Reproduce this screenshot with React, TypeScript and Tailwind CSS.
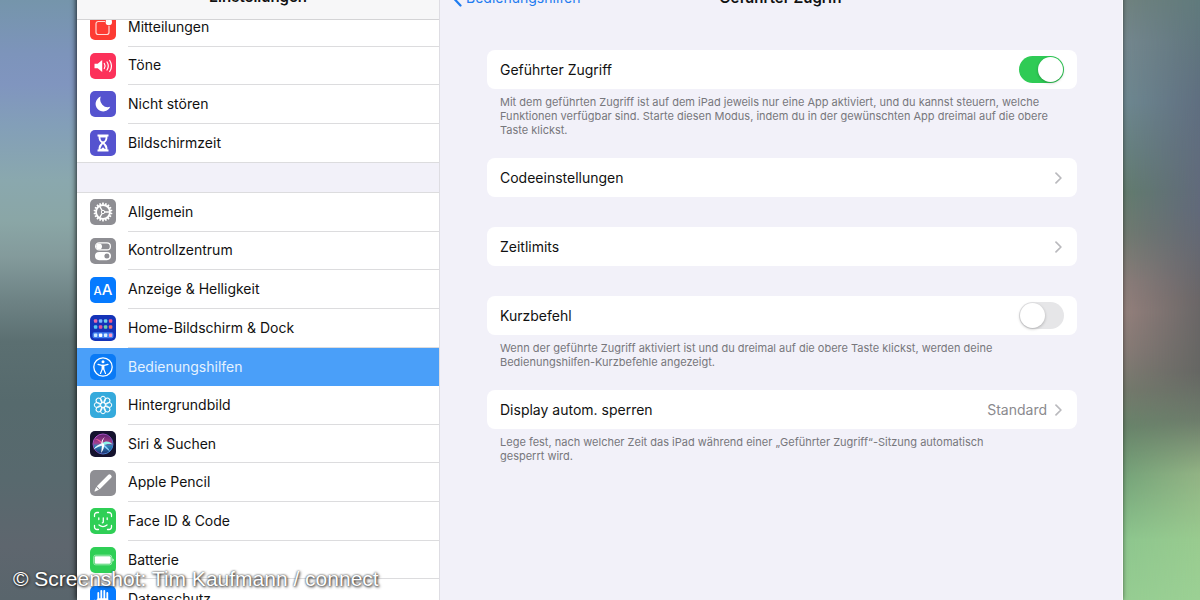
import type { ReactNode } from "react";

const svgProps = {
  viewBox: "0 0 26 26",
  fill: "none",
  "aria-hidden": true,
  className: "block size-[26px]",
} as const;

const petals = [0, 45, 90, 135, 180, 225, 270, 315];
const teeth = [0, 20, 40, 60, 80, 100, 120, 140, 160, 180, 200, 220, 240, 260, 280, 300, 320, 340];
const dockDots = [
  ["#e86aa8", "#79b8ff", "#6fd0e8", "#f0568c"],
  ["#58c8f0", "#e4549a", "#6ad0b0", "#f06a6a"],
];

const icons: Record<string, ReactNode> = {
  notifications: (
    <svg {...svgProps}>
      <path d="M15 7.500H8.200A2.200 2.200 0 0 0 6 9.700v8.600A2.200 2.200 0 0 0 8.200 20.500h8.600a2.200 2.200 0 0 0 2.200-2.200V12" stroke="#ffd9d6" strokeWidth="1.200" />
      <circle cx="18.800" cy="8" r="3.200" fill="#fff" />
    </svg>
  ),
  sounds: (
    <svg {...svgProps}>
      <path d="M4.500 10.700h3.200L12.200 7v12l-4.500-3.700H4.500z" fill="#fff" />
      <path d="M14.300 10.500q1.600 2.500 0 5M17 9q2.600 4 0 8M19.700 7.500q3.600 5.500 0 11" stroke="#fff" strokeWidth="1.200" strokeLinecap="round" />
    </svg>
  ),
  moon: (
    <svg {...svgProps}>
      <path d="M10.800 5.600a7.600 7.600 0 1 0 9.400 10.200A7.700 7.700 0 0 1 10.800 5.600z" fill="#fff" />
    </svg>
  ),
  hourglass: (
    <svg {...svgProps}>
      <path d="M7.500 4.500h11v2h-1c0 3.500-1 5-3 6.500 2 1.500 3 3 3 6.500h1v2h-11v-2h1c0-3.500 1-5 3-6.500-2-1.500-3-3-3-6.500h-1z" fill="#fff" />
      <path d="M10.300 7.500h5.400q-.2 2.200-1.700 3.700h-2q-1.500-1.500-1.700-3.700zM12.300 14.500 10.200 18.700h1.300l1.500-1.500 1.500 1.500h1.300l-2.100-4.200z" fill="#5553cf" />
    </svg>
  ),
  gear: (
    <svg {...svgProps}>
      {teeth.map((a) => (
        <path key={a} d="M12.300 3.600h1.400l.4 2.200h-2.200z" fill="#fff" transform={`rotate(${a} 13 13)`} />
      ))}
      <circle cx="13" cy="13" r="6.900" stroke="#fff" strokeWidth="1.700" />
      <path d="M13 13h6.500M13 13 9.700 7.300M13 13l-3.300 5.700" stroke="#fff" strokeWidth="1.300" />
      <circle cx="13" cy="13" r="1.700" fill="#8e8e93" stroke="#fff" strokeWidth="1" />
    </svg>
  ),
  controls: (
    <svg {...svgProps}>
      <rect x="5.600" y="4.900" width="14.800" height="7" rx="3.500" stroke="#fff" strokeWidth="1.200" />
      <circle cx="9.100" cy="8.400" r="2.900" fill="#fff" />
      <rect x="5" y="14" width="16" height="8.200" rx="4.100" fill="#fff" />
      <circle cx="16.900" cy="18.100" r="2.500" fill="#8e8e93" />
    </svg>
  ),
  display: (
    <svg {...svgProps}>
      <text x="3.600" y="18" fill="#fff" fontFamily="Inter, sans-serif" fontWeight="500" fontSize="11.500">A</text>
      <text x="11.800" y="18" fill="#fff" fontFamily="Inter, sans-serif" fontWeight="500" fontSize="15">A</text>
    </svg>
  ),
  home: (
    <svg {...svgProps}>
      <rect x="2.500" y="17.200" width="21" height="6" rx="1.800" fill="#3f7df0" />
      {dockDots.map((row, y) =>
        row.map((fill, x) => (
          <rect key={`${x}-${y}`} x={3.900 + x * 5} y={4.300 + y * 6} width="3.400" height="3.400" rx=".9" fill={fill} />
        )),
      )}
      {["#c8e8ff", "#ffffff", "#d8f0ff", "#ff9ac0"].map((fill, x) => (
        <rect key={fill} x={3.900 + x * 5} y="18.500" width="3.400" height="3.400" rx=".9" fill={fill} />
      ))}
    </svg>
  ),
  accessibility: (
    <svg {...svgProps}>
      <circle cx="13" cy="13" r="9.200" stroke="#fff" strokeWidth="1.300" />
      <circle cx="13" cy="7.700" r="1.500" fill="#fff" />
      <path d="M8 10.400l3.800.9h2.400l3.800-.9M12.300 11v4l-1.800 4.500M13.700 11v4l1.800 4.500" stroke="#fff" strokeWidth="1.200" strokeLinecap="round" strokeLinejoin="round" />
      <path d="M11.800 11h2.400v4.500h-2.400z" fill="#fff" />
    </svg>
  ),
  wallpaper: (
    <svg {...svgProps}>
      {petals.map((a) => (
        <ellipse key={a} cx="13" cy="7.300" rx="2.500" ry="3.100" stroke="#fff" strokeWidth="1" transform={`rotate(${a} 13 13)`} />
      ))}
      <circle cx="13" cy="13" r="2.400" stroke="#fff" strokeWidth="1" />
    </svg>
  ),
  siri: (
    <svg {...svgProps}>
      <defs>
        <linearGradient id="siri-ring" x1="4" y1="4" x2="22" y2="22" gradientUnits="userSpaceOnUse">
          <stop offset="0" stopColor="#c65bd6" />
          <stop offset=".5" stopColor="#7a3fa8" />
          <stop offset="1" stopColor="#2f9ee0" />
        </linearGradient>
        <linearGradient id="siri-orb" x1="13" y1="3" x2="13" y2="23" gradientUnits="userSpaceOnUse">
          <stop offset="0" stopColor="#5a1f6e" />
          <stop offset=".45" stopColor="#a83f8c" />
          <stop offset=".6" stopColor="#2a86b8" />
          <stop offset="1" stopColor="#1c2a6c" />
        </linearGradient>
      </defs>
      <circle cx="13" cy="13" r="10" fill="url(#siri-orb)" stroke="url(#siri-ring)" strokeWidth="1" />
      <path d="M13 12.500C10 8.500 7 7.500 5 8c3 1 5 3 8 5.500z" fill="#f0609c" />
      <path d="M12 12c4-2.500 8-2 10.500 1.500-3.500-1-6.500-.3-9.500 1z" fill="#8ff4ea" />
      <path d="M13.500 12c-4 .5-8 3-10 6.500 3.500-2.500 6.500-3.500 10-4z" fill="#e4f8ff" />
      <path d="M12.500 12.500c3 2 6 4.500 7.500 8-3.500-2.300-6-4.500-8-7z" fill="#8fd0ff" />
      <path d="M12 13c-.3 3-.3 6-1 9 2.500-3 3.500-6 3-9zM12.500 13c0-3 .7-5 2.500-7-2.800 2-3.800 4-3.500 7z" fill="#fff" />
    </svg>
  ),
  pencil: (
    <svg {...svgProps}>
      <path d="M18.300 4.800a1.600 1.600 0 0 1 2.300 0l.6.6a1.600 1.600 0 0 1 0 2.300L9.700 19.200l-2.900-2.900z" fill="#fff" />
      <path d="M6.200 17 9 19.800l-4 1.700a.4.4 0 0 1-.5-.5z" fill="#fff" />
    </svg>
  ),
  face: (
    <svg {...svgProps} stroke="#fff" strokeWidth="1.300" strokeLinecap="round">
      <path d="M4.500 8.500V7A2.500 2.500 0 0 1 7 4.500h1.500M17.500 4.500H19A2.500 2.500 0 0 1 21.500 7v1.500M21.500 17.500V19a2.500 2.500 0 0 1-2.500 2.500h-1.500M8.500 21.500H7A2.500 2.500 0 0 1 4.500 19v-1.500" />
      <path d="M8.800 9.800v1.700M17.200 9.800v1.700M13.300 9.800v4.200q0 .8-1 .8M9 17q4 3.200 8 0" />
    </svg>
  ),
  battery: (
    <svg {...svgProps}>
      <rect x="3.700" y="8.200" width="18" height="9.600" rx="2" stroke="#c9f3d2" strokeWidth=".7" />
      <rect x="4.700" y="9.200" width="16" height="7.600" rx="1.200" fill="#fff" />
      <path d="M22.500 11.300q1.200.4 1.200 1.700t-1.200 1.700z" fill="#fff" />
    </svg>
  ),
  hand: (
    <svg {...svgProps} stroke="#fff" strokeWidth="1.800" strokeLinecap="round">
      <path d="M8.300 14V7M11.300 13V4.800M14.300 13V4.800M17.300 14V7" />
      <path d="M8.200 13h9.200v4q0 5-4.500 5c-3 0-4-1-5.500-3.500L4.800 14.500" fill="#fff" strokeLinejoin="round" strokeWidth="1.600" />
    </svg>
  ),
};

type Item = { label: string; icon: string; color: string; active?: boolean };

const topItems: Item[] = [
  { label: "Mitteilungen", icon: "notifications", color: "bg-[#fd3b33]" },
  { label: "Töne", icon: "sounds", color: "bg-[#fc315a]" },
  { label: "Nicht stören", icon: "moon", color: "bg-[#5553cf]" },
  { label: "Bildschirmzeit", icon: "hourglass", color: "bg-[#5553cf]" },
];

const mainItems: Item[] = [
  { label: "Allgemein", icon: "gear", color: "bg-[#8e8e93]" },
  { label: "Kontrollzentrum", icon: "controls", color: "bg-[#8e8e93]" },
  { label: "Anzeige & Helligkeit", icon: "display", color: "bg-[#057aff]" },
  { label: "Home-Bildschirm & Dock", icon: "home", color: "bg-[#1433b8]" },
  { label: "Bedienungshilfen", icon: "accessibility", color: "bg-[#0a7af5]", active: true },
  { label: "Hintergrundbild", icon: "wallpaper", color: "bg-[#35aadc]" },
  { label: "Siri & Suchen", icon: "siri", color: "bg-[#15122e]" },
  { label: "Apple Pencil", icon: "pencil", color: "bg-[#8e8e93]" },
  { label: "Face ID & Code", icon: "face", color: "bg-[#2fcf56]" },
  { label: "Batterie", icon: "battery", color: "bg-[#2fcf56]" },
  { label: "Datenschutz", icon: "hand", color: "bg-[#057aff]" },
];

function SidebarRow({ item, last }: { item: Item; last: boolean }) {
  return (
    <li className={item.active ? "bg-[#4a9ff9] text-[#e4f2ff]" : ""}>
      <a href="#" aria-current={item.active ? "page" : undefined} className="flex h-full items-center gap-3 pl-[13px]">
        <span className={`size-[26px] shrink-0 overflow-hidden rounded-[5px] ${item.color}`}>{icons[item.icon]}</span>
        <span className={`flex h-full flex-1 items-center ${last || item.active ? "" : "border-b border-[#dcdcde]"}`}>
          {item.label}
        </span>
      </a>
    </li>
  );
}

function Chevron() {
  return (
    <svg viewBox="0 0 8 12" fill="none" aria-hidden className="h-3 w-2">
      <path d="M1 1.200 5.900 6 1 10.800" stroke="#b9b9bd" strokeWidth="1.700" strokeLinecap="round" strokeLinejoin="round" />
    </svg>
  );
}

function SwitchRow({ id, label, on }: { id: string; label: string; on?: boolean }) {
  return (
    <div className="flex h-[39px] items-center justify-between rounded-[8px] bg-white px-[13px]">
      <label htmlFor={id}>{label}</label>
      <input
        id={id}
        type="checkbox"
        role="switch"
        defaultChecked={on}
        className="h-[27px] w-[45px] appearance-none rounded-full bg-[#e6e6e8] p-px before:block before:size-[25px] before:rounded-full before:bg-white before:shadow-[0_1px_3px_rgba(0,0,0,0.25)] checked:bg-[#2fcb55] checked:before:ml-[18px]"
      />
    </div>
  );
}

function LinkRow({ label, value }: { label: string; value?: string }) {
  return (
    <button type="button" className="flex h-[39px] w-full items-center justify-between rounded-[8px] bg-white pr-[14px] pl-[13px]">
      <span>{label}</span>
      <span className="flex items-center gap-2 text-[#8a8a8e]">
        {value}
        <Chevron />
      </span>
    </button>
  );
}

function Note({ children }: { children: ReactNode }) {
  return <p className="mt-[6px] -mb-[9px] px-[13px] text-[11px] leading-[14px] text-[#77777c]">{children}</p>;
}

export default function App() {
  return (
    <div className="relative flex h-screen overflow-hidden font-[Inter,'Liberation_Sans',sans-serif] text-[14px] leading-5 text-[#111]">
      <div className="w-[77px] shrink-0 bg-[linear-gradient(to_bottom,#7595ab_0%,#7d94bb_9%,#8095bf_14%,#839fb8_21%,#8aa8ae_30%,#8aa6a6_37%,#839a9b_43%,#6e8385_50%,#5b6f71_57%,#566a6d_67%,#58696e_80%,#5e666e_91%,#59656c_100%)]" />
      <div className="z-10 -mt-[25px] flex min-w-0 flex-1 border-r border-[#fbfbfd] bg-[#f2f1f9] shadow-[-1px_0_5px_rgba(0,0,0,0.75)]">
        <nav aria-label="Einstellungen" className="flex w-[363px] shrink-0 flex-col border-r border-[#dedde3]">
          <header className="z-10 flex h-[45px] shrink-0 items-center justify-center border-b border-[#d4d4d6] bg-[#f7f7f8]">
            <h1 className="text-[15px] font-semibold">Einstellungen</h1>
          </header>
          <ul className="-mt-3 grid h-[155px] shrink-0 auto-rows-fr border-b border-[#dcdcde] bg-white">
            {topItems.map((item, i) => (
              <SidebarRow key={item.label} item={item} last={i === topItems.length - 1} />
            ))}
          </ul>
          <ul className="mt-[29px] grid h-[426px] shrink-0 auto-rows-fr border-t border-[#dcdcde] bg-white">
            {mainItems.map((item, i) => (
              <SidebarRow key={item.label} item={item} last={i === mainItems.length - 1} />
            ))}
          </ul>
        </nav>
        <main className="min-w-0 flex-1">
          <header className="grid h-[45px] grid-cols-[1fr_auto_1fr] items-center px-3">
            <a href="#" className="flex items-center gap-1 text-[#1f7cf0]">
              <svg viewBox="0 0 10 18" fill="none" aria-hidden className="h-[18px] w-[10px]">
                <path d="M8.500 1.500 1.500 9l7 7.500" stroke="currentColor" strokeWidth="2.200" strokeLinecap="round" strokeLinejoin="round" />
              </svg>
              Bedienungshilfen
            </a>
            <h2 className="text-[15px] font-semibold">Geführter Zugriff</h2>
          </header>
          <div className="flex flex-col gap-[30px] pt-[30px] pr-[45px] pl-[47px]">
            <section>
              <SwitchRow id="guided-access" label="Geführter Zugriff" on />
              <Note>
                Mit dem geführten Zugriff ist auf dem iPad jeweils nur eine App aktiviert, und du kannst steuern, welche
                Funktionen verfügbar sind. Starte diesen Modus, indem du in der gewünschten App dreimal auf die obere
                Taste klickst.
              </Note>
            </section>
            <LinkRow label="Codeeinstellungen" />
            <LinkRow label="Zeitlimits" />
            <section>
              <SwitchRow id="shortcut" label="Kurzbefehl" />
              <Note>
                Wenn der geführte Zugriff aktiviert ist und du dreimal auf die obere Taste klickst, werden deine
                Bedienungshilfen-Kurzbefehle angezeigt.
              </Note>
            </section>
            <section>
              <LinkRow label="Display autom. sperren" value="Standard" />
              <Note>
                Lege fest, nach welcher Zeit das iPad während einer „Geführter Zugriff“-Sitzung automatisch
                <br />
                gesperrt wird.
              </Note>
            </section>
          </div>
        </main>
      </div>
      <div className="w-[77px] shrink-0 bg-[linear-gradient(to_bottom,#70827f_0%,#74878e_7%,#6e8890_17%,#67817f_25%,#627c6e_32%,#707a70_39%,#8b7d79_47%,#94807c_52%,#867b75_59%,#74796c_65%,#68836a_71%,#77a67b_80%,#8dc68e_90%,#96cd92_100%)]">
        <div className="h-full bg-[linear-gradient(to_bottom,#607a7c_0%,#5f6e80_17%,#61697a_35%,#6a6667_50%,#656663_62%,#6d7c6b_70%,#92b384_79%,#99cb8f_90%,#9bd094_100%)] [mask-image:linear-gradient(to_right,transparent,black)]" />
      </div>
      <p className="absolute bottom-[9px] left-[13px] z-20 font-['Liberation_Sans',Arial,sans-serif] text-[21px] leading-6 text-white [text-shadow:0_0_2px_#333,1px_1px_3px_#222]">
        © Screenshot: Tim Kaufmann / connect
      </p>
    </div>
  );
}
